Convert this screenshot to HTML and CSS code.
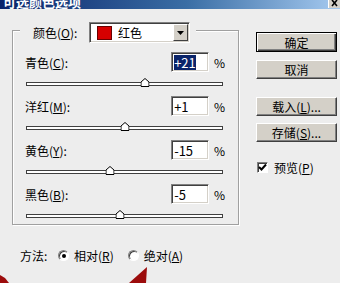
FILE: index.html
```html
<!DOCTYPE html>
<html lang="zh-CN">
<head>
  <meta charset="UTF-8">
  <title>可选颜色选项</title>
  <link rel="stylesheet" href="styles.css">
</head>
<body>

  <!-- Title bar -->
  <div class="titlebar">
    <span class="title">可选颜色选项</span>
    <span class="close">
      <svg width="11" height="8" viewBox="0 0 11 8"><path d="M3 0 L8 6 M8 0 L3 6" stroke="#000" stroke-width="1.6"/></svg>
    </span>
  </div>

  <div class="dialog">
    <div class="group">
      <div class="legend">
        <span class="legend-label">颜色(<u>O</u>):</span>
        <div class="select">
          <span class="swatch"></span>
          <span class="select-text">红色</span>
          <span class="select-btn">
            <svg width="7" height="4" viewBox="0 0 7 4"><path d="M0 0 H7 L3.5 4 Z" fill="#000"/></svg>
          </span>
        </div>
      </div>

      <div class="row">
        <div class="row-head">
          <span class="row-label">青色(<u>C</u>):</span>
          <span class="field"><span class="selected">+21</span></span>
          <span class="pct">%</span>
        </div>
        <div class="track">
          <svg class="thumb" style="left:60.5%" width="9" height="9" viewBox="0 0 9 9"><path d="M4.5 0.5 L8.5 4 V8.5 H0.5 V4 Z" fill="#fff" stroke="#000"/></svg>
        </div>
      </div>

      <div class="row">
        <div class="row-head">
          <span class="row-label">洋红(<u>M</u>):</span>
          <span class="field">+1</span>
          <span class="pct">%</span>
        </div>
        <div class="track">
          <svg class="thumb" style="left:50.5%" width="9" height="9" viewBox="0 0 9 9"><path d="M4.5 0.5 L8.5 4 V8.5 H0.5 V4 Z" fill="#fff" stroke="#000"/></svg>
        </div>
      </div>

      <div class="row">
        <div class="row-head">
          <span class="row-label">黄色(<u>Y</u>):</span>
          <span class="field">-15</span>
          <span class="pct">%</span>
        </div>
        <div class="track">
          <svg class="thumb" style="left:42.5%" width="9" height="9" viewBox="0 0 9 9"><path d="M4.5 0.5 L8.5 4 V8.5 H0.5 V4 Z" fill="#fff" stroke="#000"/></svg>
        </div>
      </div>

      <div class="row">
        <div class="row-head">
          <span class="row-label">黑色(<u>B</u>):</span>
          <span class="field">-5</span>
          <span class="pct">%</span>
        </div>
        <div class="track">
          <svg class="thumb" style="left:47.5%" width="9" height="9" viewBox="0 0 9 9"><path d="M4.5 0.5 L8.5 4 V8.5 H0.5 V4 Z" fill="#fff" stroke="#000"/></svg>
        </div>
      </div>
    </div>

    <!-- Buttons -->
    <div class="side">
      <div class="btn btn-default">确定</div>
      <div class="btn btn-cancel">取消</div>
      <div class="btn btn-load">载入(<u>L</u>)...</div>
      <div class="btn btn-save">存储(<u>S</u>)...</div>
      <div class="check-row">
        <span class="checkbox">
          <svg width="9" height="9" viewBox="0 0 9 9"><path d="M1 4 L3.5 6.5 L8 1.5" fill="none" stroke="#000" stroke-width="2"/></svg>
        </span>
        <span>预览(<u>P</u>)</span>
      </div>
    </div>
  </div>

  <div class="method">
    <span class="method-label">方法:</span>
    <span class="radio on"></span>
    <span class="radio-text">相对(<u>R</u>)</span>
    <span class="radio second"></span>
    <span class="radio-text">绝对(<u>A</u>)</span>
  </div>

  <!-- annotation arrows -->
  <svg class="arrows" width="340" height="283" viewBox="0 0 340 283">
    <path d="M0 275 L5 278 L9 283 L0 283 Z" fill="#9c0c0c"/>
    <path d="M147 267 L129 283 L146 283 Z" fill="#9c0c0c"/>
  </svg>

</body>
</html>
```

FILE: styles.css
```css
body {
  margin: 0;
  width: 340px;
  height: 283px;
  overflow: hidden;
  position: relative;
  background: #ededed;
  font-family: "Noto Sans CJK SC", "DejaVu Sans", sans-serif;
  font-size: 12px;
  color: #000;
}

u {
  text-decoration: underline;
}

/* Title bar */
.titlebar {
  height: 9px;
  overflow: hidden;
  display: flex;
  justify-content: space-between;
  background: linear-gradient(to right, #0a246a, #3a6ea5 55%, #a6caf0);
}

.title {
  color: #fff;
  font-weight: bold;
  font-size: 13px;
  line-height: 13px;
  margin-top: -5px;
  padding-left: 3px;
}

.close {
  width: 11px;
  height: 8px;
  background: #d4d0c8;
  border-left: 1px solid #fff;
  display: flex;
}

/* Dialog */
.dialog {
  display: flex;
  align-items: flex-start;
}

.group {
  margin: 21px 0 0 12px;
  width: 227px;
  box-sizing: border-box;
  border: 1px solid #a0a0a0;
  box-shadow: 1px 1px 0 #fff, inset 1px 1px 0 #fff;
  padding: 0 13px 6px 12px;
  display: flex;
  flex-direction: column;
}

.legend {
  align-self: flex-start;
  display: flex;
  align-items: center;
  height: 21px;
  margin: -9px 0 0 -5px;
  padding: 0 6px 0 13px;
  background: #ededed;
}

.legend-label {
  width: 56px;
}

.select {
  width: 101px;
  height: 21px;
  box-sizing: border-box;
  display: flex;
  align-items: center;
  background: #fff;
  border: 1px solid;
  border-color: #808080 #fff #fff #808080;
  box-shadow: inset 1px 1px 0 #404040, inset -1px -1px 0 #d4d0c8;
}

.swatch {
  width: 15px;
  height: 14px;
  box-sizing: border-box;
  margin-left: 7px;
  background: #d60000;
  border: 1px solid #6a0000;
}

.select-text {
  margin-left: 6px;
}

.select-btn {
  margin: 0 1px 0 auto;
  width: 15px;
  height: 17px;
  box-sizing: border-box;
  background: #d4d0c8;
  border: 1px solid;
  border-color: #fff #404040 #404040 #fff;
  display: flex;
  align-items: center;
  justify-content: center;
}

/* Slider rows */
.row {
  margin-top: 10px;
}

.row:nth-child(2) {
  margin-top: 9px;
}

.row-head {
  display: flex;
  align-items: center;
  height: 20px;
}

.row-label {
  width: 147px;
}

.field {
  width: 38px;
  height: 20px;
  box-sizing: border-box;
  display: flex;
  align-items: center;
  padding-left: 2px;
  background: #fff;
  border: 1px solid;
  border-color: #808080 #fff #fff #808080;
  box-shadow: inset 1px 1px 0 #404040, inset -1px -1px 0 #d4d0c8;
  font-size: 13px;
}

.selected {
  background: #0a246a;
  color: #fff;
  line-height: 15px;
}

.pct {
  margin-left: 5px;
}

.track {
  position: relative;
  margin: 10px 0 0 1px;
  width: 197px;
  height: 4px;
  box-sizing: border-box;
  background: #fff;
  border: 1px solid #404040;
}

.thumb {
  position: absolute;
  top: -5px;
  transform: translateX(-50%);
}

/* Right column */
.side {
  margin: 23px 0 0 17px;
  width: 81px;
  display: flex;
  flex-direction: column;
}

.btn {
  height: 19px;
  box-sizing: border-box;
  display: flex;
  align-items: center;
  justify-content: center;
  background: #d4d0c8;
  border: 1px solid;
  border-color: #fff #404040 #404040 #fff;
  box-shadow: inset -1px -1px 0 #808080;
}

.btn-default {
  height: 20px;
  border: 1px solid #000;
  box-shadow: inset 1px 1px 0 #fff, inset -1px -1px 0 #404040, inset -2px -2px 0 #808080;
}

.btn-cancel {
  margin-top: 8px;
}

.btn-load {
  margin-top: 18px;
}

.btn-save {
  margin-top: 7px;
}

.check-row {
  margin-top: 17px;
  display: flex;
  align-items: center;
  gap: 6px;
  padding-left: 1px;
}

.checkbox {
  width: 11px;
  height: 11px;
  box-sizing: border-box;
  background: #fff;
  border: 1px solid;
  border-color: #808080 #fff #fff #808080;
  box-shadow: inset 1px 1px 0 #404040;
  display: flex;
  align-items: center;
  justify-content: center;
}

/* Method */
.method {
  margin-top: 22px;
  padding-left: 20px;
  height: 16px;
  display: flex;
  align-items: center;
}

.method-label {
  width: 38px;
}

.radio {
  width: 11px;
  height: 11px;
  box-sizing: border-box;
  border-radius: 50%;
  background: #fff;
  border: 1px solid;
  border-color: #808080 #fff #fff #808080;
  box-shadow: inset 1px 1px 0 #404040;
  position: relative;
}

.radio.on::after {
  content: "";
  position: absolute;
  left: 3px;
  top: 3px;
  width: 4px;
  height: 4px;
  border-radius: 50%;
  background: #000;
}

.radio.second {
  margin-left: 14px;
}

.radio-text {
  margin-left: 5px;
}

.arrows {
  position: absolute;
  left: 0;
  top: 0;
  pointer-events: none;
}
```
